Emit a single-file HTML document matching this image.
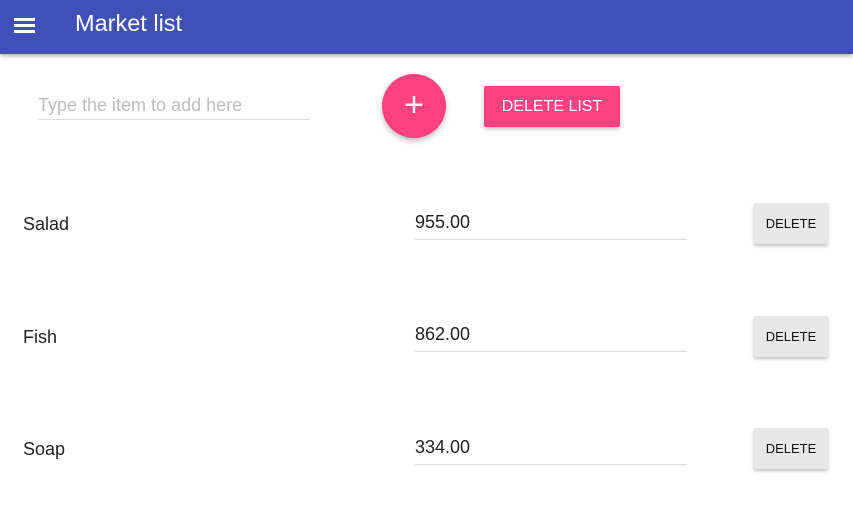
<!DOCTYPE html>
<html><head><meta charset="utf-8"><style>
*{margin:0;padding:0;box-sizing:border-box}
body{width:853px;height:532px;background:#fff;font-family:"Liberation Sans",Arial,sans-serif;position:relative;overflow:hidden}
.bar{position:absolute;left:0;top:0;width:853px;height:54px;background:#3f51b5;box-shadow:0 2px 4px rgba(0,0,0,.3)}
.ham{position:absolute;left:14px;width:21px;height:2.5px;background:#fff}
.title{position:absolute;left:75px;top:10px;color:#fff;font-size:23.5px}
.abs{position:absolute}
.inp{left:38px;top:95px;width:272px;height:25px;border-bottom:1px solid #ddd;color:#bdbdbd;font-size:18px}
.fab{left:382px;top:74px;width:64px;height:64px;border-radius:50%;background:#ff4081;box-shadow:0 3px 6px rgba(0,0,0,.25);color:#fff;font-size:34px;text-align:center;line-height:62px;font-weight:300}
.dl{left:484px;top:86px;width:136px;height:41px;background:#ff4081;color:#fff;font-size:16px;text-align:center;line-height:41px;border-radius:2px;box-shadow:0 2px 4px rgba(0,0,0,.25)}
.lab{left:23px;font-size:18px;color:#222}
.val{left:415px;width:272px;height:28px;border-bottom:1px solid #ddd;font-size:18px;color:#222}
.del{left:754px;width:74px;height:41px;background:#e8e8e8;font-size:13px;text-align:center;line-height:41px;border-radius:2px;box-shadow:0 2px 3px rgba(0,0,0,.25);color:#111}
</style></head><body>
<div class="bar">
<div class="ham" style="top:18px"></div><div class="ham" style="top:24px"></div><div class="ham" style="top:30px"></div>
<div class="title">Market list</div>
</div>
<div class="abs inp">Type the item to add here</div>
<div class="abs fab">+</div>
<div class="abs dl">DELETE LIST</div>

<div class="abs lab" style="top:214px">Salad</div>
<div class="abs val" style="top:212px">955.00</div>
<div class="abs del" style="top:203px">DELETE</div>

<div class="abs lab" style="top:327px">Fish</div>
<div class="abs val" style="top:324px">862.00</div>
<div class="abs del" style="top:316px">DELETE</div>

<div class="abs lab" style="top:439px">Soap</div>
<div class="abs val" style="top:437px">334.00</div>
<div class="abs del" style="top:428px">DELETE</div>
</body></html>
